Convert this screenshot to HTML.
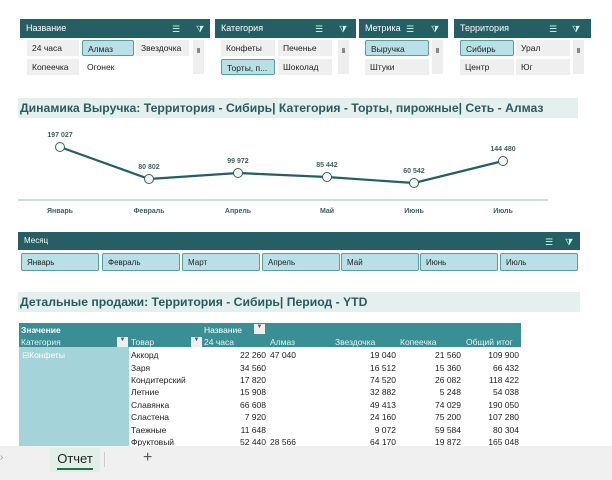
<!DOCTYPE html>
<html><head><meta charset="utf-8"><style>
*{box-sizing:border-box;margin:0;padding:0}
body{width:612px;height:480px;overflow:hidden;background:#fff;font-family:"Liberation Sans","DejaVu Sans",sans-serif;position:relative;font-size:9px;color:#222}
.a{position:absolute}
.hd{background:#265e63;color:#fff;font-size:9px;padding:4px 6px;height:19px}
.it{position:absolute;height:16px;background:#efefef;font-size:8.5px;padding:3px 5px;white-space:nowrap;overflow:hidden}
.sel{background:#b8e0e6;border:1px solid #5d9ba3;border-radius:2px}
.sb{position:absolute;width:11px;background:#eee}
.sb:after{content:"";position:absolute;left:4px;top:8px;width:3px;height:5px;background:#888}
.ic{position:absolute;top:5px;color:#cfe;font-size:9px}
.ttl{background:#e3f0ee;color:#2b5a5e;font-weight:bold;font-size:12.2px;padding:3px 2px;height:20px;white-space:nowrap}
.mb{position:absolute;top:253px;height:18px;background:#b8e0e6;border:1px solid #5d9ba3;border-radius:2px;font-size:8px;padding:4px 5px;width:78px}
table{border-collapse:collapse;font-size:8.5px}
td{height:12.4px;padding:0 2px;white-space:nowrap}
.r{text-align:right}
</style></head><body>

<div class="a hd" style="left:20px;top:19px;width:190px">Название<span class="ic" style="left:152px">☰</span><span class="ic" style="left:176px">⧩</span></div>
<div class="it" style="left:27px;top:40px;width:52px">24 часа</div>
<div class="it sel" style="left:82px;top:40px;width:52px">Алмаз</div>
<div class="it" style="left:136px;top:40px;width:53px">Звездочка</div>
<div class="it" style="left:27px;top:59px;width:52px">Копеечка</div>
<div class="it" style="left:82px;top:59px;width:52px;background:#fff">Огонек</div>
<div class="sb" style="left:193px;top:40px;height:34px"></div>

<div class="a hd" style="left:215px;top:19px;width:141px">Категория<span class="ic" style="left:100px">☰</span><span class="ic" style="left:124px">⧩</span></div>
<div class="it" style="left:221px;top:40px;width:54px">Конфеты</div>
<div class="it" style="left:278px;top:40px;width:54px">Печенье</div>
<div class="it sel" style="left:221px;top:59px;width:54px">Торты, п...</div>
<div class="it" style="left:278px;top:59px;width:54px">Шоколад</div>
<div class="sb" style="left:338px;top:40px;height:34px"></div>

<div class="a hd" style="left:359px;top:19px;width:89px">Метрика<span class="ic" style="left:47px">☰</span><span class="ic" style="left:72px">⧩</span></div>
<div class="it sel" style="left:365px;top:40px;width:64px">Выручка</div>
<div class="it" style="left:365px;top:59px;width:64px">Штуки</div>
<div class="sb" style="left:432px;top:40px;height:34px"></div>

<div class="a hd" style="left:454px;top:19px;width:137px">Территория<span class="ic" style="left:95px">☰</span><span class="ic" style="left:118px">⧩</span></div>
<div class="it sel" style="left:460px;top:40px;width:54px">Сибирь</div>
<div class="it" style="left:516px;top:40px;width:54px">Урал</div>
<div class="it" style="left:460px;top:59px;width:54px">Центр</div>
<div class="it" style="left:516px;top:59px;width:54px">Юг</div>
<div class="sb" style="left:573px;top:40px;height:34px"></div>

<div class="a ttl" style="left:18px;top:98px;width:560px">Динамика Выручка: Территория - Сибирь| Категория - Торты, пирожные| Сеть - Алмаз</div>

<svg class="a" style="left:0;top:0" width="612" height="230">
<line x1="18" y1="200" x2="548" y2="200" stroke="#b7d3ce" stroke-width="1.5"/>
<polyline points="60,147 149,179 238,173 327,177 414,183 503,161" fill="none" stroke="#265e63" stroke-width="2.2"/>
<g fill="#f4f6f6" stroke="#365" stroke-width="1">
<circle cx="60" cy="147" r="4.5"/><circle cx="149" cy="179" r="4.5"/><circle cx="238" cy="173" r="4.5"/><circle cx="327" cy="177" r="4.5"/><circle cx="414" cy="183" r="4.5"/><circle cx="503" cy="161" r="4.5"/></g>
<g font-family="Liberation Sans,sans-serif" font-size="7" font-weight="bold" fill="#3d5f5f" text-anchor="middle">
<text x="60" y="137">197 027</text><text x="149" y="169">80 802</text><text x="238" y="163">99 972</text><text x="327" y="167">85 442</text><text x="414" y="173">60 542</text><text x="503" y="151">144 480</text>
<text x="60" y="213">Январь</text><text x="149" y="213">Февраль</text><text x="238" y="213">Апрель</text><text x="327" y="213">Май</text><text x="414" y="213">Июнь</text><text x="503" y="213">Июль</text></g>
</svg>

<div class="a hd" style="left:18px;top:232px;width:562px;height:18px;font-size:8px">Месяц<span class="ic" style="left:527px">☰</span><span class="ic" style="left:547px">⧩</span></div>
<div class="mb" style="left:21px">Январь</div>
<div class="mb" style="left:102px">Февраль</div>
<div class="mb" style="left:182px">Март</div>
<div class="mb" style="left:262px">Апрель</div>
<div class="mb" style="left:341px">Май</div>
<div class="mb" style="left:420px">Июнь</div>
<div class="mb" style="left:500px">Июль</div>

<div class="a ttl" style="left:18px;top:292px;width:562px">Детальные продажи: Территория - Сибирь| Период - YTD</div>

<div class="a" style="left:19px;top:323px;width:502px;height:24px;background:#3a8f94"></div>
<div class="a" style="left:19px;top:347px;width:110px;height:100px;background:#a4d4da"></div>
<div class="a" style="color:#fff;font-weight:bold;left:21px;top:325px;font-size:8.5px">Значение</div>
<div class="a" style="color:#fff;left:204px;top:325px;font-size:8.5px">Название</div>
<div class="a" style="left:254px;top:324px;width:11px;height:10px;background:#eee;color:#555;font-size:6px;text-align:center">▼</div>
<div class="a" style="left:117px;top:337px;width:11px;height:10px;background:#eee;color:#555;font-size:6px;text-align:center">▼</div>
<div class="a" style="left:191px;top:337px;width:11px;height:10px;background:#eee;color:#555;font-size:6px;text-align:center">▼</div>
<div class="a" style="color:#e8f6f6;font-size:8.5px;left:21px;top:337px">Категория</div>
<div class="a" style="color:#e8f6f6;font-size:8.5px;left:131px;top:337px">Товар</div>
<div class="a" style="color:#e8f6f6;font-size:8.5px;left:204px;top:337px">24 часа</div>
<div class="a" style="color:#e8f6f6;font-size:8.5px;left:270px;top:337px">Алмаз</div>
<div class="a" style="color:#e8f6f6;font-size:8.5px;left:335px;top:337px">Звездочка</div>
<div class="a" style="color:#e8f6f6;font-size:8.5px;left:400px;top:337px">Копеечка</div>
<div class="a" style="color:#e8f6f6;font-size:8.5px;left:466px;top:337px">Общий итог</div>
<div class="a" style="color:#fff;font-size:8.5px;left:22px;top:350px">⊟Конфеты</div>

<table class="a" style="left:129px;top:349px;width:392px">
<colgroup><col style="width:73px"><col style="width:66px"><col style="width:65px"><col style="width:65px"><col style="width:65px"><col style="width:58px"></colgroup>
<tr><td>Аккорд</td><td class="r">22 260</td><td>47 040</td><td class="r">19 040</td><td class="r">21 560</td><td class="r">109 900</td></tr>
<tr><td>Заря</td><td class="r">34 560</td><td></td><td class="r">16 512</td><td class="r">15 360</td><td class="r">66 432</td></tr>
<tr><td>Кондитерский</td><td class="r">17 820</td><td></td><td class="r">74 520</td><td class="r">26 082</td><td class="r">118 422</td></tr>
<tr><td>Летние</td><td class="r">15 908</td><td></td><td class="r">32 882</td><td class="r">5 248</td><td class="r">54 038</td></tr>
<tr><td>Славянка</td><td class="r">66 608</td><td></td><td class="r">49 413</td><td class="r">74 029</td><td class="r">190 050</td></tr>
<tr><td>Сластена</td><td class="r">7 920</td><td></td><td class="r">24 160</td><td class="r">75 200</td><td class="r">107 280</td></tr>
<tr><td>Таежные</td><td class="r">11 648</td><td></td><td class="r">9 072</td><td class="r">59 584</td><td class="r">80 304</td></tr>
<tr><td>Фруктовый</td><td class="r">52 440</td><td>28 566</td><td class="r">64 170</td><td class="r">19 872</td><td class="r">165 048</td></tr>
</table>

<div class="a" style="left:0;top:446px;width:612px;height:34px;background:#f0f0f0"></div>
<div class="a" style="left:0;top:452px;color:#999;font-size:10px">›</div>
<div class="a" style="left:50px;top:448px;width:50px;height:24px;background:#e2efe8;font-size:13px;text-align:center;padding-top:3px;color:#222">Отчет<div style="position:absolute;left:7px;right:7px;bottom:2px;height:2px;background:#217346"></div></div>
<div class="a" style="left:104px;top:452px;width:1px;height:15px;background:#ccc"></div>
<div class="a" style="left:143px;top:449px;font-size:16px;color:#555">+</div>
</body></html>
